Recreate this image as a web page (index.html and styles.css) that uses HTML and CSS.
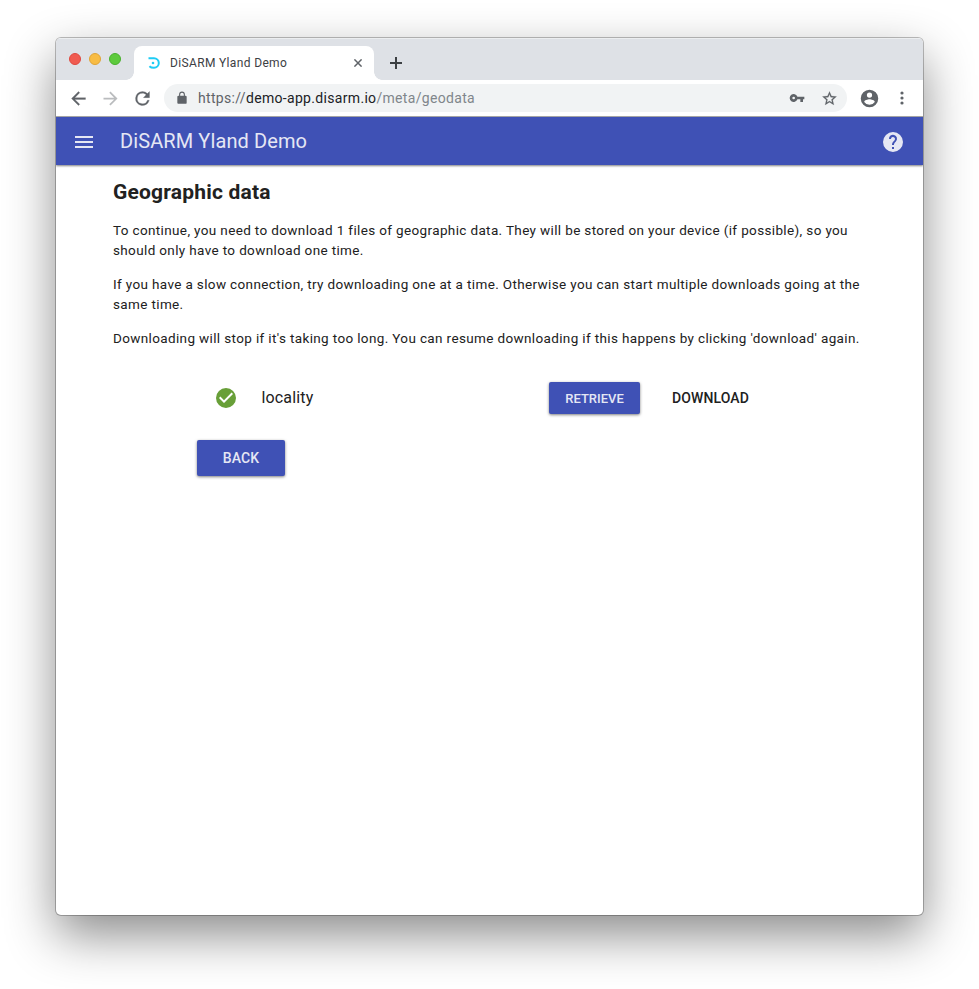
FILE: index.html
```html
<!DOCTYPE html>
<html lang="en">
<head>
<meta charset="utf-8">
<title>DiSARM Yland Demo</title>
<link rel="stylesheet" href="styles.css">
</head>
<body>
<div class="window">
  <div class="tabstrip">
    <div class="lights"><i class="light red"></i><i class="light yellow"></i><i class="light green"></i></div>
    <div class="tab">
      <svg class="favicon" width="12" height="12" viewBox="0 0 12 12"><path d="M.5 1.2H6a4.8 4.8 0 0 1 0 9.6Q3 10.8 1.4 9.2" fill="none" stroke="#1dccf5" stroke-width="2"/><circle cx="5" cy="6" r="1.3" fill="#1dccf5"/></svg>
      <span class="tab-title">DiSARM Yland Demo</span>
      <svg class="tab-close" width="8" height="8" viewBox="0 0 8 8"><path d="M.4.4l7.2 7.2M7.6.4L.4 7.6" stroke="#5f6368" stroke-width="1.5"/></svg>
    </div>
    <svg class="new-tab" width="12" height="12" viewBox="0 0 12 12"><path d="M6 0v12M0 6h12" stroke="#3c4043" stroke-width="2"/></svg>
  </div>
  <div class="toolbar">
    <div class="nav">
      <svg width="21" height="21" viewBox="0 0 24 24" fill="#5f6368"><path d="M20 11H7.83l5.59-5.59L12 4l-8 8 8 8 1.41-1.41L7.83 13H20z" stroke="#5f6368" stroke-width=".3"/></svg>
      <svg width="21" height="21" viewBox="0 0 24 24" fill="#babcbe"><path d="M12 4l-1.41 1.41L16.17 11H4v2h12.17l-5.58 5.59L12 20l8-8z"/></svg>
      <svg width="21" height="21" viewBox="0 0 24 24" fill="#5f6368"><path d="M17.65 6.35A7.96 7.96 0 0 0 12 4a8 8 0 1 0 7.73 10h-2.08A6 6 0 1 1 12 6c1.66 0 3.14.69 4.22 1.78L13 11h7V4z" stroke="#5f6368" stroke-width=".3"/></svg>
    </div>
    <div class="omnibox">
      <svg class="lock" width="14" height="14" viewBox="0 0 24 24" fill="#5f6368"><path d="M18 8h-1V6A5 5 0 0 0 7 6v2H6a2 2 0 0 0-2 2v10c0 1.1.9 2 2 2h12a2 2 0 0 0 2-2V10a2 2 0 0 0-2-2zM8.9 8V6a3.1 3.1 0 0 1 6.2 0v2z"/></svg>
      <span class="url"><span class="scheme">https://</span>demo-app.disarm.io<span class="path">/meta/geodata</span></span>
      <svg class="key" width="16" height="16" viewBox="0 0 24 24" fill="#5f6368"><path d="M12.65 10A6 6 0 1 0 12.65 14H17v4h4v-4h2v-4zM7 14a2 2 0 1 1 0-4 2 2 0 0 1 0 4z"/></svg>
      <svg class="star" width="17" height="17" viewBox="0 0 24 24" fill="#5f6368"><path d="M22 9.24l-7.19-.62L12 2 9.19 8.63 2 9.24l5.46 4.73L5.82 21 12 17.27 18.18 21l-1.63-7.03zM12 15.4l-3.76 2.27 1-4.28-3.32-2.88 4.38-.38L12 6.1l1.71 4.04 4.38.38-3.32 2.88 1 4.28z" stroke="#5f6368" stroke-width=".3"/></svg>
    </div>
    <svg class="avatar" width="21" height="21" viewBox="0 0 24 24" fill="#5f6368"><path d="M12 2a10 10 0 1 0 0 20 10 10 0 0 0 0-20zm0 3a3 3 0 1 1 0 6 3 3 0 0 1 0-6zm0 14.2a7.2 7.2 0 0 1-6-3.22c.03-1.99 4-3.08 6-3.08 1.99 0 5.97 1.09 6 3.08a7.2 7.2 0 0 1-6 3.22z"/></svg>
    <svg class="more" width="4" height="14" viewBox="0 0 4 14" fill="#5f6368"><circle cx="2" cy="2" r="1.6"/><circle cx="2" cy="7" r="1.6"/><circle cx="2" cy="12" r="1.6"/></svg>
  </div>
  <header class="appbar">
    <svg width="24" height="24" viewBox="0 0 24 24" fill="#e5e7f4"><path d="M3 18h18v-2H3zm0-5h18v-2H3zm0-7v2h18V6z"/></svg>
    <span class="app-title">DiSARM Yland Demo</span>
    <svg class="help" width="24" height="24" viewBox="0 0 24 24" fill="#e5e7f4"><path d="M12 2a10 10 0 1 0 0 20 10 10 0 0 0 0-20zm1 17h-2v-2h2zm2.07-7.75l-.9.92C13.45 12.9 13 13.5 13 15h-2v-.5c0-1.1.45-2.1 1.17-2.83l1.24-1.26A2 2 0 1 0 10 9H8a4 4 0 1 1 7.07 2.25z"/></svg>
  </header>
  <main class="content">
    <h1>Geographic data</h1>
    <p>To continue, you need to download 1 files of geographic data. They will be stored on your device (if possible), so you<br>should only have to download one time.</p>
    <p>If you have a slow connection, try downloading one at a time. Otherwise you can start multiple downloads going at the<br>same time.</p>
    <p>Downloading will stop if it's taking too long. You can resume downloading if this happens by clicking 'download' again.</p>
    <div class="item">
      <svg width="24" height="24" viewBox="0 0 24 24" fill="#689f38"><path d="M12 2a10 10 0 1 0 0 20 10 10 0 0 0 0-20zm-2 15l-5-5 1.41-1.41L10 14.17l7.59-7.59L19 8z"/></svg>
      <span class="item-name">locality</span>
      <button class="btn retrieve">RETRIEVE</button>
      <button class="btn download">DOWNLOAD</button>
    </div>
    <button class="btn back">BACK</button>
  </main>
</div>
</body>
</html>
```
FILE: styles.css
```css
* { box-sizing: border-box; }
body { display: flow-root; margin: 0; height: 989px; overflow: hidden; background: #fff; font-family: Roboto, "Liberation Sans", sans-serif; color: #212121; }
svg { display: block; flex: none; }
.window { width: 867px; height: 877px; margin: 38px 0 0 56px; border-radius: 5px; background: #fff; overflow: hidden; box-shadow: 0 0 0 1px rgba(0,0,0,.25), 0 20px 50px rgba(0,0,0,.46); }
.tabstrip { height: 42px; background: #dee1e6; display: flex; align-items: flex-start; border-top: 1px solid #eceef0; }
.lights { display: flex; gap: 8px; padding: 14px 0 0 13px; width: 78px; }
.light { width: 12px; height: 12px; border-radius: 50%; }
.red { background: #f05b51; border: 1px solid #df4940; }
.yellow { background: #f8bc44; border: 1px solid #e0a436; }
.green { background: #5dca3d; border: 1px solid #48b12d; }
.tab { position: relative; width: 240px; height: 34px; margin-top: 7px; background: #fff; border-radius: 8px 8px 0 0; display: flex; align-items: center; padding: 0 12px 0 14px; }
.tab::before, .tab::after { content: ""; position: absolute; bottom: 0; width: 8px; height: 8px; }
.tab::before { left: -8px; background: radial-gradient(circle at 0 0, transparent 7.5px, #fff 8px); }
.tab::after { right: -8px; background: radial-gradient(circle at 100% 0, transparent 7.5px, #fff 8px); }
.tab-title { font-size: 12px; letter-spacing: .35px; margin-left: 10px; color: #3c4043; white-space: nowrap; }
.tab-close { margin-left: auto; }
.new-tab { margin: 18px 0 0 16px; }
.toolbar { height: 37px; display: flex; align-items: center; border-bottom: 1px solid #aaa; }
.nav { display: flex; gap: 11px; margin-left: 11.5px; }
.omnibox { width: 683px; height: 28px; margin-left: 11.5px; border-radius: 14px; background: #f1f3f4; display: flex; align-items: center; padding: 0 9.5px 0 11px; }
.url { margin-left: 9px; font-size: 14px; letter-spacing: .32px; color: #202124; white-space: nowrap; }
.scheme { color: #5f6368; }
.path { color: #80868b; }
.key { margin-left: auto; }
.star { margin-left: 15.5px; }
.avatar { margin-left: 11.5px; }
.more { margin-left: 20px; }
.appbar { position: relative; height: 48px; background: #3f51b5; display: flex; align-items: center; padding: 2px 18px 0 16px; box-shadow: 0 1px 2px rgba(0,0,0,.5); }
.app-title { margin: -2px 0 0 24px; font-size: 20px; letter-spacing: .1px; color: #e5e7f4; }
.help { margin-left: auto; }
.content { padding: 13px 0 0 57px; }
h1 { margin: 0 0 14px; font-size: 21px; line-height: 28px; font-weight: 700; letter-spacing: .2px; }
p { margin: 0 0 14px; font-size: 13.5px; line-height: 20px; letter-spacing: .36px; white-space: nowrap; }
.item { height: 32px; margin-top: 34px; padding-left: 100.5px; display: flex; align-items: center; }
.item-name { width: 298.5px; margin-left: 24px; margin-top: -1px; font-size: 16px; letter-spacing: .15px; }
.btn { border: 0; padding: 0; border-radius: 2px; font-family: inherit; font-weight: 500; color: #e5e7f4; background: #3f51b5; box-shadow: 0 1px 3px rgba(0,0,0,.5); }
.retrieve { width: 91px; height: 32px; margin-left: -11px; font-size: 13px; }
.download { width: 109px; height: 32px; margin-left: 16px; font-size: 14px; letter-spacing: .1px; color: #212121; background: none; box-shadow: none; }
.back { display: block; width: 88px; height: 36px; margin: 26px 0 0 84px; font-size: 14px; letter-spacing: .1px; }
```
